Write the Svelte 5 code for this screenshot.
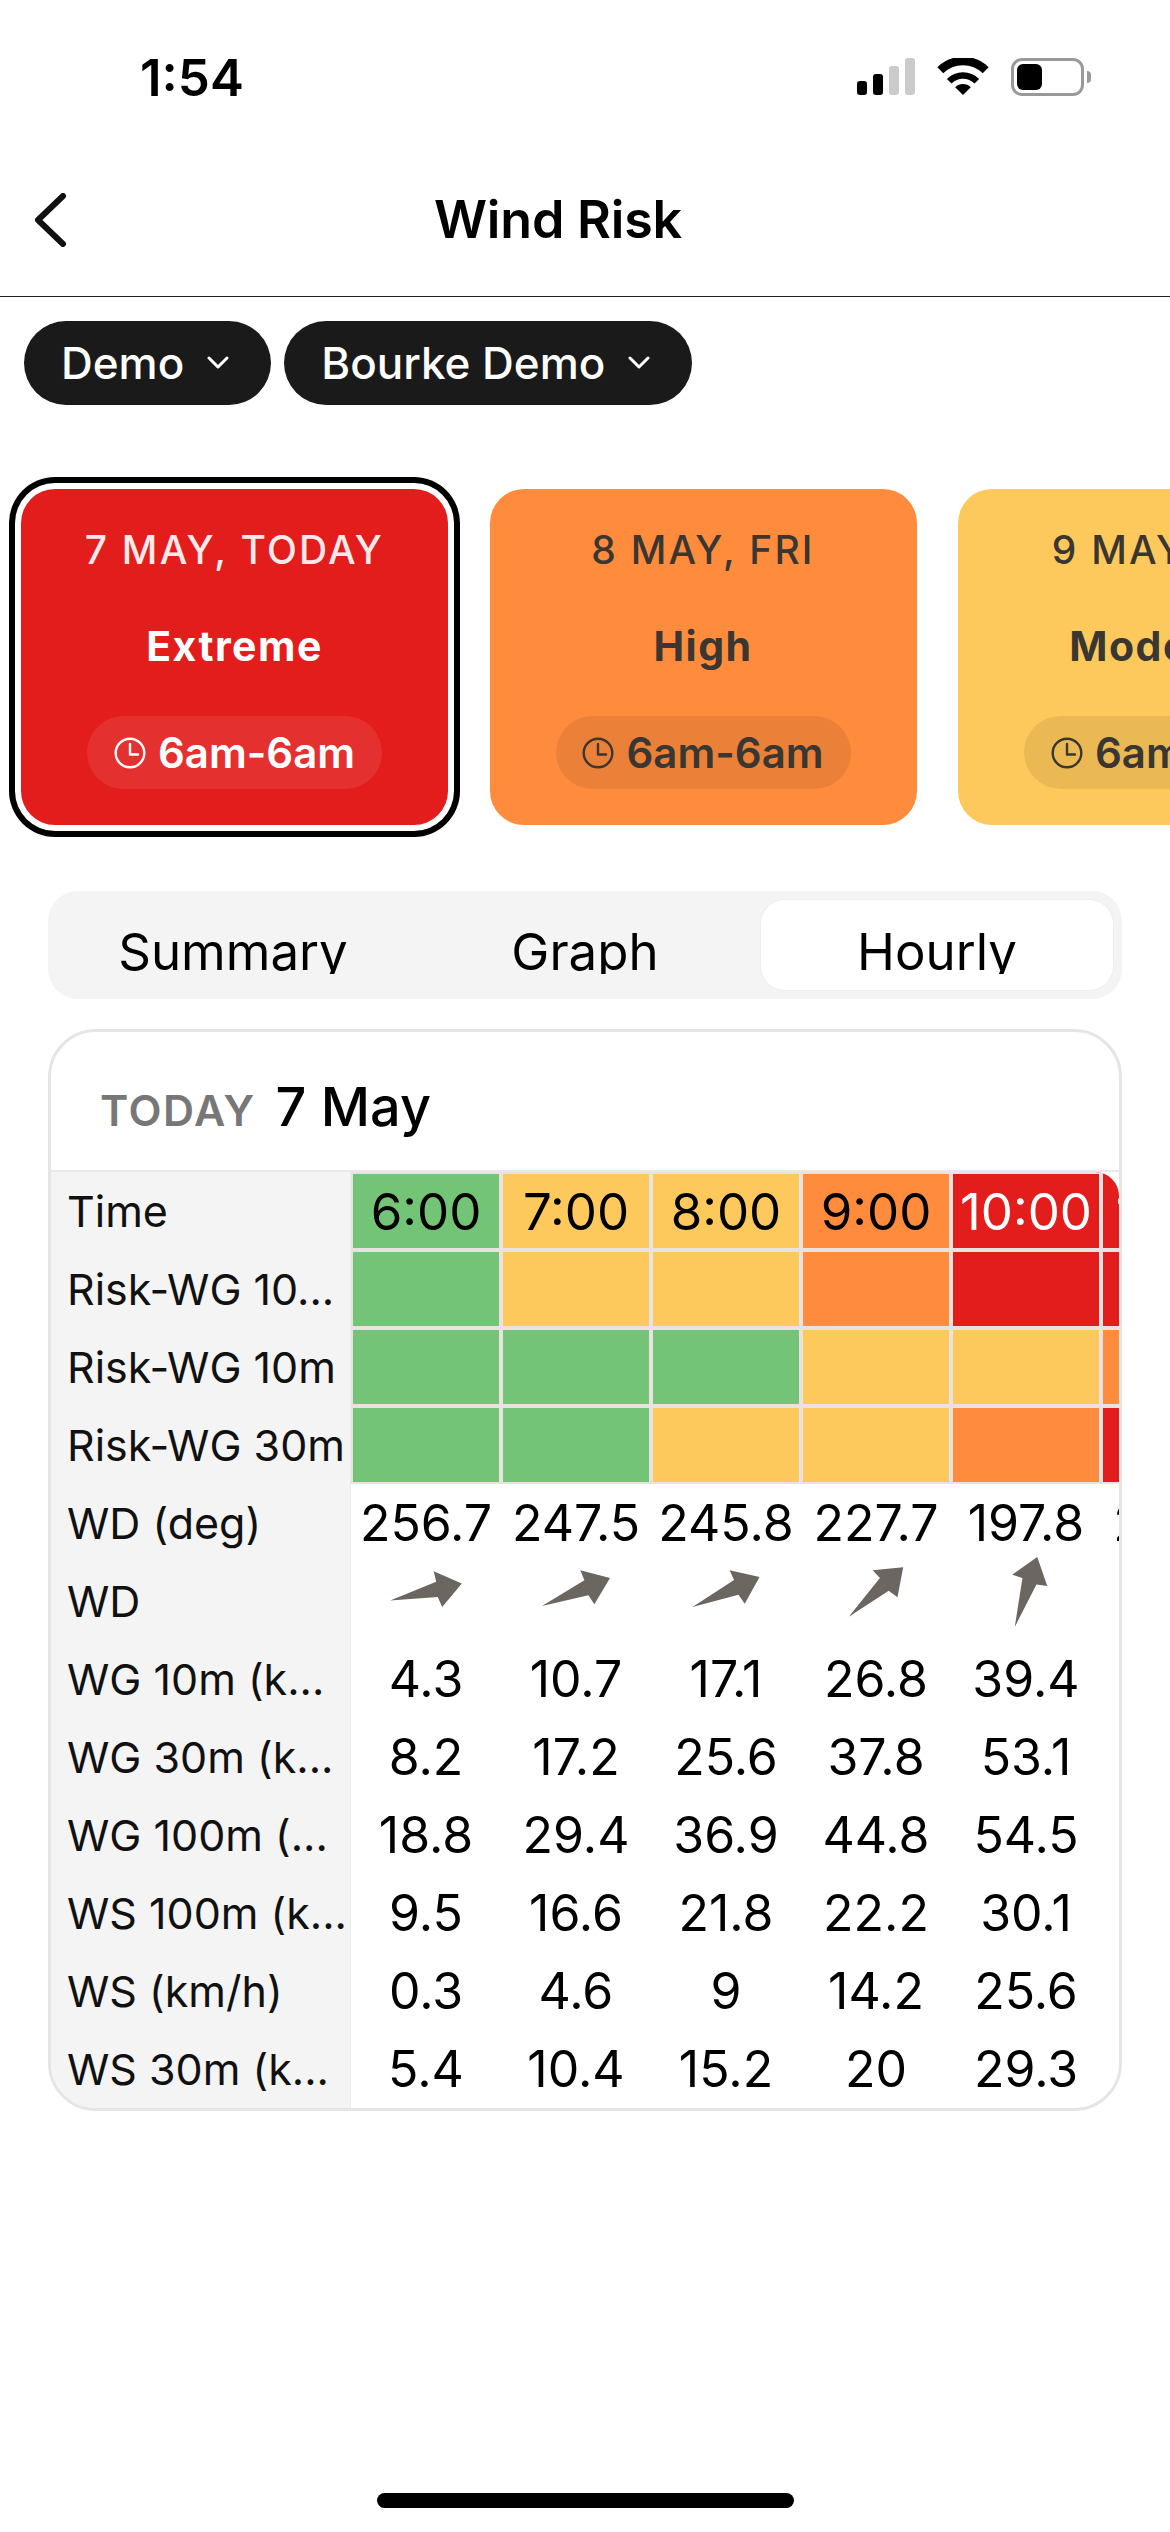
<script lang="ts">
  const days = [
    { date: '7 MAY, TODAY', level: 'Extreme', tone: 'extreme', selected: true },
    { date: '8 MAY, FRI', level: 'High', tone: 'high', selected: false },
    { date: '9 MAY, SAT', level: 'Moderate', tone: 'moderate', selected: false },
  ];

  const tabs = ['Summary', 'Graph', 'Hourly'];
  let activeTab = 'Hourly';

  const times = [
    ['6:00', 'low'],
    ['7:00', 'moderate'],
    ['8:00', 'moderate'],
    ['9:00', 'high'],
    ['10:00', 'extreme'],
    ['11:00', 'extreme'],
  ];

  const riskRows = [
    ['low', 'moderate', 'moderate', 'high', 'extreme', 'extreme'],
    ['low', 'low', 'low', 'moderate', 'moderate', 'high'],
    ['low', 'low', 'moderate', 'moderate', 'high', 'extreme'],
  ];

  const degrees = [256.7, 247.5, 245.8, 227.7, 197.8, 214.3];

  const valueRows = [
    ['4.3', '10.7', '17.1', '26.8', '39.4', '44.1'],
    ['8.2', '17.2', '25.6', '37.8', '53.1', '58.2'],
    ['18.8', '29.4', '36.9', '44.8', '54.5', '60.3'],
    ['9.5', '16.6', '21.8', '22.2', '30.1', '35.4'],
    ['0.3', '4.6', '9', '14.2', '25.6', '29.8'],
    ['5.4', '10.4', '15.2', '20', '29.3', '33.6'],
  ];

  const labels = [
    'Time',
    'Risk-WG 10...',
    'Risk-WG 10m',
    'Risk-WG 30m',
    'WD (deg)',
    'WD',
    'WG 10m (k...',
    'WG 30m (k...',
    'WG 100m (...',
    'WS 100m (k...',
    'WS (km/h)',
    'WS 30m (k...',
  ];
</script>

<div class="screen">
  <div class="status-bar">
    <span class="clock">1:54</span>
    <div class="status-icons">
      <div class="signal">
        <i class="bar b1"></i>
        <i class="bar b2"></i>
        <i class="bar b3 off"></i>
        <i class="bar b4 off"></i>
      </div>
      <svg class="wifi" width="52" height="38" viewBox="0 0 52 38" fill="none" stroke="#000">
        <path d="M3.3 12.2a32.5 32.5 0 0 1 45.4 0" stroke-width="8.5" />
        <path d="M12.2 23.2a19.5 19.5 0 0 1 27.6 0" stroke-width="6.5" />
        <path d="M18.2 29.2a11 11 0 0 1 15.6 0L26 37z" fill="#000" stroke="none" />
      </svg>
      <div class="battery">
        <div class="battery-body"><div class="battery-fill"></div></div>
        <div class="battery-tip"></div>
      </div>
    </div>
  </div>

  <header class="nav">
    <svg class="back" width="34" height="54" viewBox="0 0 34 54" fill="none" stroke="#111" stroke-width="6" stroke-linecap="round" stroke-linejoin="round">
      <polyline points="29,3 4,27 29,51" />
    </svg>
    <h1>Wind Risk</h1>
  </header>

  <div class="filters">
    <button class="pill">
      Demo
      <svg width="24" height="14" viewBox="0 0 24 14" fill="none" stroke="#fff" stroke-width="3" stroke-linecap="round" stroke-linejoin="round"><polyline points="3,2 12,11 21,2" /></svg>
    </button>
    <button class="pill">
      Bourke Demo
      <svg width="24" height="14" viewBox="0 0 24 14" fill="none" stroke="#fff" stroke-width="3" stroke-linecap="round" stroke-linejoin="round"><polyline points="3,2 12,11 21,2" /></svg>
    </button>
  </div>

  <div class="day-rail">
    {#each days as day}
      <div class="day-card {day.tone}" class:selected={day.selected}>
        <div class="day-date">{day.date}</div>
        <div class="day-level">{day.level}</div>
        <div class="day-chip">
          <svg width="32" height="32" viewBox="0 0 32 32" fill="none" stroke="currentColor" stroke-width="2.4" stroke-linecap="round" stroke-linejoin="round">
            <circle cx="16" cy="16" r="14.3" />
            <polyline points="16,7 16,17.5 24,17.5" />
          </svg>
          <span>6am-6am</span>
        </div>
      </div>
    {/each}
  </div>

  <div class="tabs">
    {#each tabs as tab}
      <button class="tab" class:active={activeTab === tab} onclick={() => (activeTab = tab)}>
        <span class="tab-label">{tab}</span>
      </button>
    {/each}
  </div>

  <section class="table-card">
    <div class="table-head">
      <span class="today">TODAY</span>
      <span class="head-date">7 May</span>
    </div>
    <div class="table-body">
      <div class="labels">
        {#each labels as label}
          <div class="label">{label}</div>
        {/each}
      </div>
      <div class="scroller">
        <div class="row time-row">
          {#each times as [time, tone]}
            <div class="cell risk {tone}">{time}</div>
          {/each}
        </div>
        {#each riskRows as row}
          <div class="row">
            {#each row as tone}
              <div class="cell risk {tone}"></div>
            {/each}
          </div>
        {/each}
        <div class="row">
          {#each degrees as deg}
            <div class="cell">{deg}</div>
          {/each}
        </div>
        <div class="row">
          {#each degrees as deg}
            <div class="cell arrow-cell">
              <svg width="92" height="92" viewBox="0 0 90 90" style="transform: rotate({deg - 180}deg)">
                <polygon points="45,9 63,33 52.5,35 45,81 37.5,33 27,33" fill="#6b665f" />
              </svg>
            </div>
          {/each}
        </div>
        {#each valueRows as row}
          <div class="row">
            {#each row as value}
              <div class="cell">{value}</div>
            {/each}
          </div>
        {/each}
      </div>
    </div>
  </section>

  <div class="home-bar"></div>
</div>

<style>
  :global(body) {
    margin: 0;
    background: #fff;
  }

  .screen {
    width: 1170px;
    height: 2532px;
    display: flex;
    flex-direction: column;
    overflow: hidden;
    background: #fff;
    color: #000;
    font-family: Inter, "Liberation Sans", sans-serif;
  }

  .status-bar {
    height: 156px;
    box-sizing: border-box;
    padding: 48px 79px 0 140px;
    display: flex;
    justify-content: space-between;
    align-items: flex-start;
  }

  .clock {
    font-size: 51px;
    font-weight: 600;
    line-height: 60px;
  }

  .status-icons {
    display: flex;
    align-items: flex-start;
    margin-top: 10px;
  }

  .signal {
    display: flex;
    align-items: flex-end;
    gap: 6px;
    height: 37px;
    margin-right: 22px;
  }

  .bar {
    width: 10px;
    border-radius: 3px;
    background: #000;
  }

  .bar.off {
    background: #cbcbcb;
  }

  .b1 { height: 14px; }
  .b2 { height: 21px; }
  .b3 { height: 29px; }
  .b4 { height: 37px; }

  .battery {
    display: flex;
    align-items: center;
    margin-left: 22px;
  }

  .battery-body {
    width: 73px;
    height: 38px;
    box-sizing: border-box;
    border: 3px solid #999;
    border-radius: 11px;
    padding: 3px;
  }

  .battery-fill {
    width: 25px;
    height: 100%;
    background: #000;
    border-radius: 6px;
  }

  .battery-tip {
    width: 4px;
    height: 12px;
    margin-left: 3px;
    background: #999;
    border-radius: 0 6px 6px 0;
  }

  .nav {
    height: 141px;
    box-sizing: border-box;
    border-bottom: 1px solid #222;
    padding-right: 54px;
    display: flex;
    align-items: center;
    justify-content: center;
    position: relative;
  }

  .back {
    position: absolute;
    left: 34px;
    top: 37px;
  }

  .nav h1 {
    margin: 0 0 12px;
    font-size: 52px;
    font-weight: 600;
    line-height: 60px;
    letter-spacing: -0.2px;
  }

  .filters {
    display: flex;
    gap: 13px;
    padding: 24px 24px 0;
  }

  .pill {
    height: 84px;
    padding: 0 41px 0 37px;
    display: flex;
    align-items: center;
    gap: 22px;
    border: none;
    border-radius: 42px;
    background: #1a1a1a;
    color: #fff;
    font-family: inherit;
    font-size: 44px;
    font-weight: 500;
  }

  .day-rail {
    display: flex;
    gap: 41.5px;
    padding: 84px 0 66px 21px;
    overflow: hidden;
  }

  .day-card {
    flex: none;
    width: 427px;
    height: 336px;
    box-sizing: border-box;
    padding-top: 36px;
    border-radius: 34px;
    display: flex;
    flex-direction: column;
    align-items: center;
    color: #3a3631;
  }

  .day-card.selected {
    box-shadow: 0 0 0 6px #fff, 0 0 0 12px #000;
  }

  .day-card.extreme { background: #e31c1c; color: #fff; }
  .day-card.high { background: #ff8c3d; }
  .day-card.moderate { background: #fec95c; }

  .day-date {
    font-size: 39px;
    font-weight: 500;
    line-height: 50px;
    letter-spacing: 2.2px;
    white-space: nowrap;
  }

  .day-card.extreme .day-date {
    color: #fde9e9;
  }

  .day-level {
    margin-top: 46px;
    font-size: 41px;
    font-weight: 700;
    line-height: 50px;
    letter-spacing: 1.5px;
    white-space: nowrap;
  }

  .day-chip {
    margin-top: 45px;
    width: 295px;
    height: 73px;
    display: flex;
    align-items: center;
    justify-content: center;
    gap: 12px;
    border-radius: 37px;
    background: rgba(0, 0, 0, 0.08);
    font-size: 42px;
    font-weight: 600;
    white-space: nowrap;
  }

  .day-card.extreme .day-chip {
    background: rgba(255, 255, 255, 0.09);
  }

  .tabs {
    margin: 0 48px;
    height: 108px;
    box-sizing: border-box;
    padding: 9px;
    display: flex;
    background: #f4f4f4;
    border-radius: 30px;
  }

  .tab {
    flex: 1;
    padding: 0;
    border: none;
    border-radius: 24px;
    background: transparent;
    color: #000;
    font-family: inherit;
    font-size: 51px;
    align-self: stretch;
    display: block;
  }

  .tab.active {
    background: #fff;
    box-shadow: 0 0 0 1px #eeeeee;
  }

  .tab-label {
    display: block;
    height: 74px;
    box-sizing: border-box;
    padding-top: 22px;
    line-height: 60px;
    overflow: hidden;
    margin-top: -16px;
  }

  .table-card {
    margin: 30px 48px 0;
    border: 3px solid #e5e5e5;
    border-radius: 48px;
    overflow: hidden;
  }

  .table-head {
    height: 140px;
    box-sizing: border-box;
    border-bottom: 2px solid #e8e8e8;
    padding: 45px 0 0 49px;
    display: flex;
    align-items: baseline;
    gap: 20px;
    line-height: 60px;
  }

  .today {
    font-size: 43px;
    font-weight: 600;
    letter-spacing: 1.5px;
    color: #777;
  }

  .head-date {
    font-size: 54px;
    font-weight: 500;
  }

  .table-body {
    display: flex;
  }

  .labels {
    width: 300px;
    box-sizing: border-box;
    flex: none;
    background: #f4f4f4;
    border-right: 1px solid #ececec;
  }

  .label {
    height: 78px;
    padding-left: 16px;
    display: flex;
    align-items: center;
    font-size: 43px;
    color: #111;
    white-space: nowrap;
    overflow: hidden;
  }

  .scroller {
    flex: 1;
    min-width: 0;
    overflow: hidden;
    border-top-right-radius: 24px;
  }

  .row {
    display: flex;
    height: 78px;
  }

  .cell {
    flex: none;
    width: 150px;
    height: 78px;
    box-sizing: border-box;
    display: flex;
    align-items: center;
    justify-content: center;
    font-size: 50px;
    white-space: nowrap;
  }

  .time-row .cell {
    font-size: 51px;
  }

  .cell.risk {
    border: 2px solid #e9e2e0;
  }

  .cell.low { background: #73c476; }
  .cell.moderate { background: #fec95c; }
  .cell.high { background: #ff8c3d; }
  .cell.extreme { background: #e31c1c; color: #fff; }

  .arrow-cell svg {
    margin-top: -18px;
    flex: none;
  }

  .home-bar {
    margin: auto auto 24px;
    width: 417px;
    height: 15px;
    border-radius: 8px;
    background: #000;
  }
</style>
